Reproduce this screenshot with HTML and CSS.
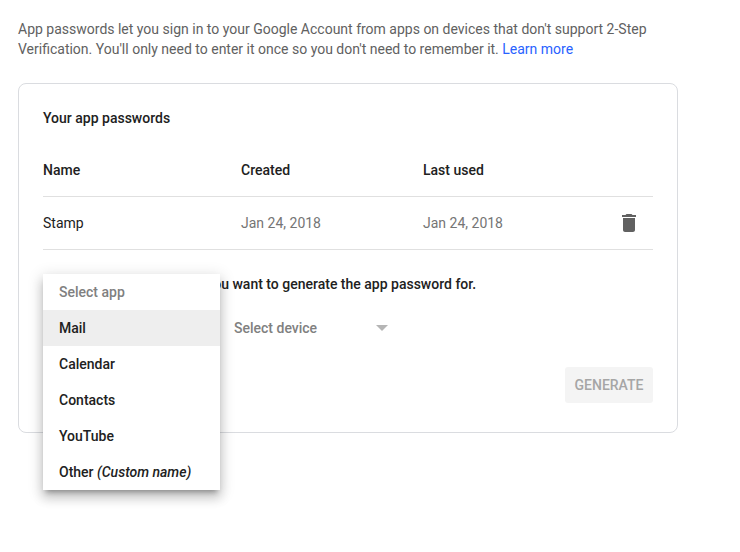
FILE: index.html
```html
<!DOCTYPE html>
<html lang="en">
<head>
<meta charset="utf-8">
<meta name="viewport" content="width=device-width, initial-scale=1">
<title>App passwords</title>
<link rel="stylesheet" href="styles.css">
</head>
<body>
<main class="page">
  <p class="intro">App passwords let you sign in to your Google Account from apps on devices that don't support 2-Step Verification. You'll only need to enter it once so you don't need to remember it. <a href="#learn-more">Learn more</a></p>

  <section class="card">
    <h2 class="heading">Your app passwords</h2>

    <table class="passwords">
      <thead>
        <tr>
          <th class="col-name" scope="col">Name</th>
          <th class="col-created" scope="col">Created</th>
          <th scope="col">Last used</th>
          <td class="col-action"></td>
        </tr>
      </thead>
      <tbody>
        <tr>
          <td class="name">Stamp</td>
          <td>Jan 24, 2018</td>
          <td>Jan 24, 2018</td>
          <td class="col-action">
            <button class="delete" type="button" aria-label="Revoke">
              <svg width="24" height="24" viewBox="0 0 24 24" aria-hidden="true"><path d="M6 19c0 1.100.9 2 2 2h8c1.100 0 2-.9 2-2V7H6v12zM19 4h-3.500l-1-1h-5l-1 1H5v2h14V4z"/></svg>
            </button>
          </td>
        </tr>
      </tbody>
    </table>

    <form class="generator">
      <p class="heading">Select the app and device you want to generate the app password for.</p>
      <div class="pickers">
        <div class="picker app-picker">
          <div class="menu" role="listbox" aria-label="App">
            <button class="option placeholder" type="button" role="option" disabled>Select app</button>
            <button class="option active" type="button" role="option">Mail</button>
            <button class="option" type="button" role="option">Calendar</button>
            <button class="option" type="button" role="option">Contacts</button>
            <button class="option" type="button" role="option">YouTube</button>
            <button class="option" type="button" role="option">Other <em>(Custom name)</em></button>
          </div>
        </div>
        <div class="picker device-picker">
          <select class="select" aria-label="Device">
            <option>Select device</option>
          </select>
          <svg class="arrow" width="12" height="6" viewBox="0 0 12 6" aria-hidden="true"><path d="M0 0h12L6 6z"/></svg>
        </div>
      </div>
      <div class="actions">
        <button class="generate" type="submit" disabled>GENERATE</button>
      </div>
    </form>
  </section>
</main>
</body>
</html>
```
FILE: styles.css
```css
* {
  box-sizing: border-box;
}

body {
  margin: 0;
  background: #fff;
  color: #212121;
  font: 400 14px/20px Roboto, sans-serif;
}

button,
select {
  margin: 0;
  padding: 0;
  border: 0;
  background: transparent;
  color: inherit;
  font: inherit;
}

.page {
  max-width: 696px;
  min-height: 100vh;
  padding: 19px 18px;
}

.intro {
  margin: 0 0 24px;
  color: #616161;
}

.intro a {
  color: #2962ff;
  text-decoration: none;
}

.card {
  padding: 24px;
  border: 1px solid #dadce0;
  border-radius: 8px;
}

.heading {
  margin: 0;
  font-size: 14px;
  font-weight: 500;
  line-height: 20px;
}

.passwords {
  width: 100%;
  margin-top: 16px;
  border-collapse: separate;
  border-spacing: 0;
  table-layout: fixed;
}

.passwords th,
.passwords td {
  height: 53px;
  padding: 0;
  border-bottom: 1px solid #e0e0e0;
  text-align: left;
  vertical-align: middle;
}

.passwords th {
  font-weight: 500;
}

.passwords td {
  color: #757575;
}

.passwords .name {
  color: #212121;
}

.col-name {
  width: 198px;
}

.col-created {
  width: 182px;
}

.passwords .col-action {
  width: 36px;
}

.delete {
  display: block;
  width: 24px;
  height: 24px;
  fill: #616161;
  cursor: pointer;
}

.generator {
  margin-top: 24px;
}

.pickers {
  display: flex;
  gap: 14px;
  margin-top: 16px;
}

.picker {
  position: relative;
  height: 36px;
}

.app-picker {
  width: 177px;
}

.device-picker {
  width: 160px;
}

.select {
  width: 100%;
  height: 100%;
  appearance: none;
  color: #808080;
  font-weight: 500;
}

.arrow {
  position: absolute;
  top: 15px;
  right: 6px;
  fill: #b5b5b5;
  pointer-events: none;
}

.menu {
  position: absolute;
  z-index: 1;
  top: -36px;
  left: 0;
  width: 100%;
  background: #fff;
  box-shadow:
    0 5px 5px -3px rgba(0, 0, 0, 0.3),
    0 8px 10px 1px rgba(0, 0, 0, 0.14),
    0 3px 14px 2px rgba(0, 0, 0, 0.12);
}

.option {
  display: block;
  width: 100%;
  height: 36px;
  padding: 0 16px;
  font-weight: 500;
  text-align: left;
  white-space: nowrap;
}

.option.placeholder {
  color: #808080;
}

.option.active {
  background: #eee;
}

.actions {
  display: flex;
  justify-content: flex-end;
  margin-top: 21px;
  padding-bottom: 5px;
}

.generate {
  min-width: 88px;
  height: 36px;
  padding: 0 8px;
  border-radius: 3px;
  background: #f4f4f4;
  color: #a6a6a6;
  font-weight: 500;
}
```
